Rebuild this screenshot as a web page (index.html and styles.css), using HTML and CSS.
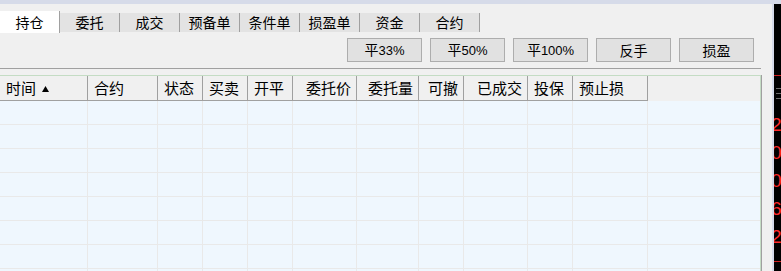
FILE: index.html
```html
<!DOCTYPE html>
<html lang="zh-CN">
<head>
    <meta charset="UTF-8">
    <meta name="viewport" content="width=device-width, initial-scale=1.0">
    <title>持仓</title>
    <link rel="stylesheet" href="styles.css">
</head>
<body>

    <div class="top-band"></div>
    <div class="window">
        <div class="panel">
            <div class="tabs">
                <div class="tab active">持仓</div>
                <div class="tab">委托</div>
                <div class="tab">成交</div>
                <div class="tab">预备单</div>
                <div class="tab">条件单</div>
                <div class="tab">损盈单</div>
                <div class="tab">资金</div>
                <div class="tab">合约</div>
            </div>

            <div class="actions">
                <button class="btn">平<span class="num">33%</span></button>
                <button class="btn">平<span class="num">50%</span></button>
                <button class="btn">平<span class="num">100%</span></button>
                <button class="btn">反手</button>
                <button class="btn">损盈</button>
            </div>

            <div class="rule"></div>

            <div class="grid">
                <div class="grid-row grid-head">
                    <div class="cell">时间 <svg class="sort" width="7" height="6" viewBox="0 0 7 6"><polygon points="3.5,0 7,6 0,6" fill="#000"/></svg></div>
                    <div class="cell">合约</div>
                    <div class="cell">状态</div>
                    <div class="cell">买卖</div>
                    <div class="cell">开平</div>
                    <div class="cell right">委托价</div>
                    <div class="cell right">委托量</div>
                    <div class="cell right">可撤</div>
                    <div class="cell right">已成交</div>
                    <div class="cell">投保</div>
                    <div class="cell">预止损</div>
                    <div class="cell filler"></div>
                </div>
                <div id="grid-body"></div>
            </div>
        </div>
        <div class="divider"></div>
        <div class="chart">
            <div class="chart-line"></div>
            <div class="ticks">
                <span></span><span></span><span></span>
            </div>
            <div class="price">2</div>
            <div class="price">0</div>
            <div class="price">0</div>
            <div class="price">6</div>
            <div class="price">2</div>
            <div class="chart-line bottom"></div>
        </div>
    </div>

    <script>
        // empty rows of the order grid
        const body = document.getElementById("grid-body");
        for (let i = 0; i < 8; i++) {
            const row = document.createElement("div");
            row.className = "grid-row";
            for (let c = 0; c < 12; c++) {
                const cell = document.createElement("div");
                cell.className = "cell";
                row.appendChild(cell);
            }
            body.appendChild(row);
        }
    </script>

</body>
</html>
```

FILE: styles.css
```css
* {
    box-sizing: border-box;
}
html, body {
    margin: 0;
    height: 271px;
    overflow: hidden;
}
body {
    font-family: "Noto Sans CJK SC", "Noto Sans", sans-serif;
    background-color: #f0f0f0;
    color: #000;
}
.top-band {
    height: 4px;
    background: #d6dbe9;
}
.window {
    display: flex;
    height: 267px;
    overflow: hidden;
}
.panel {
    width: 772px;
    flex: none;
    background: #f0f0f0;
    padding-top: 7px;
}
.divider {
    width: 2px;
    flex: none;
    background: #d6dbe9;
}
.chart {
    flex: 1;
    background: #000;
    overflow: hidden;
    padding-top: 71px;
}

/* tabs */
.tabs {
    display: flex;
    align-items: center;
    height: 22px;
}
.tab {
    width: 60px;
    height: 19px;
    background: #e3e3e3;
    border-right: 1px solid #a0a0a0;
    font-size: 14px;
    line-height: 19px;
    text-align: center;
}
.tab.active {
    height: 22px;
    line-height: 22px;
    background: #fff;
}

/* action buttons */
.actions {
    display: flex;
    justify-content: flex-end;
    gap: 8px;
    margin-top: 5px;
    padding-right: 18px;
}
.btn {
    width: 75px;
    height: 24px;
    padding: 0;
    background: #e1e1e1;
    border: 1px solid #adadad;
    font-family: "Noto Sans CJK SC", sans-serif;
    font-size: 14px;
    line-height: 20px;
    color: #000;
}
.btn .num {
    font-family: "Liberation Sans", Arial, sans-serif;
    font-size: 13px;
}
.rule {
    height: 1px;
    margin: 6px 11px 0 0;
    background: #a0a0a0;
}

/* order grid */
.grid {
    width: 761px;
    margin-top: 6px;
    border-top: 1px solid #c4dcc4;
    border-right: 1px solid #c4dcc4;
    box-shadow: 1px 0 0 #a0a0a0;
    background: #eff7fe;
    height: 200px;
}
.grid-row {
    display: grid;
    grid-template-columns: 88px 70px 45px 45px 45px 64px 62px 45px 64px 45px 75px 1fr;
    height: 24px;
    border-bottom: 1px solid #e9e9e9;
}
.grid-row .cell {
    border-right: 1px solid #e9e9e9;
}
.grid-row .cell:last-child {
    border-right: none;
}
.grid-head {
    height: 25px;
    background: #f0f0f0;
    border-bottom: none;
}
.grid-head .cell {
    height: 25px;
    border-right: 1px solid #a0a0a0;
    border-bottom: 1px solid #a0a0a0;
    padding: 0 5px 0 6px;
    font-size: 15px;
    line-height: 24px;
    white-space: nowrap;
}
.grid-head .cell.right {
    text-align: right;
}
.grid-head .cell.filler {
    border: none;
}
.sort {
    margin-left: 3px;
    vertical-align: 2px;
}

/* right edge of the price chart */
.chart-line {
    height: 1px;
    background: #d02020;
}
.chart-line.bottom {
    margin-top: 10px;
}
.ticks {
    height: 35px;
    padding: 12px 0 0 2px;
}
.ticks span {
    display: block;
    width: 5px;
    height: 1px;
    margin-bottom: 4px;
    background: #6a6a6a;
}
.price {
    height: 28px;
    margin-left: -3px;
    font-family: "Liberation Sans", Arial, sans-serif;
    font-size: 19px;
    line-height: 28px;
    color: #ff2a2a;
}
```
